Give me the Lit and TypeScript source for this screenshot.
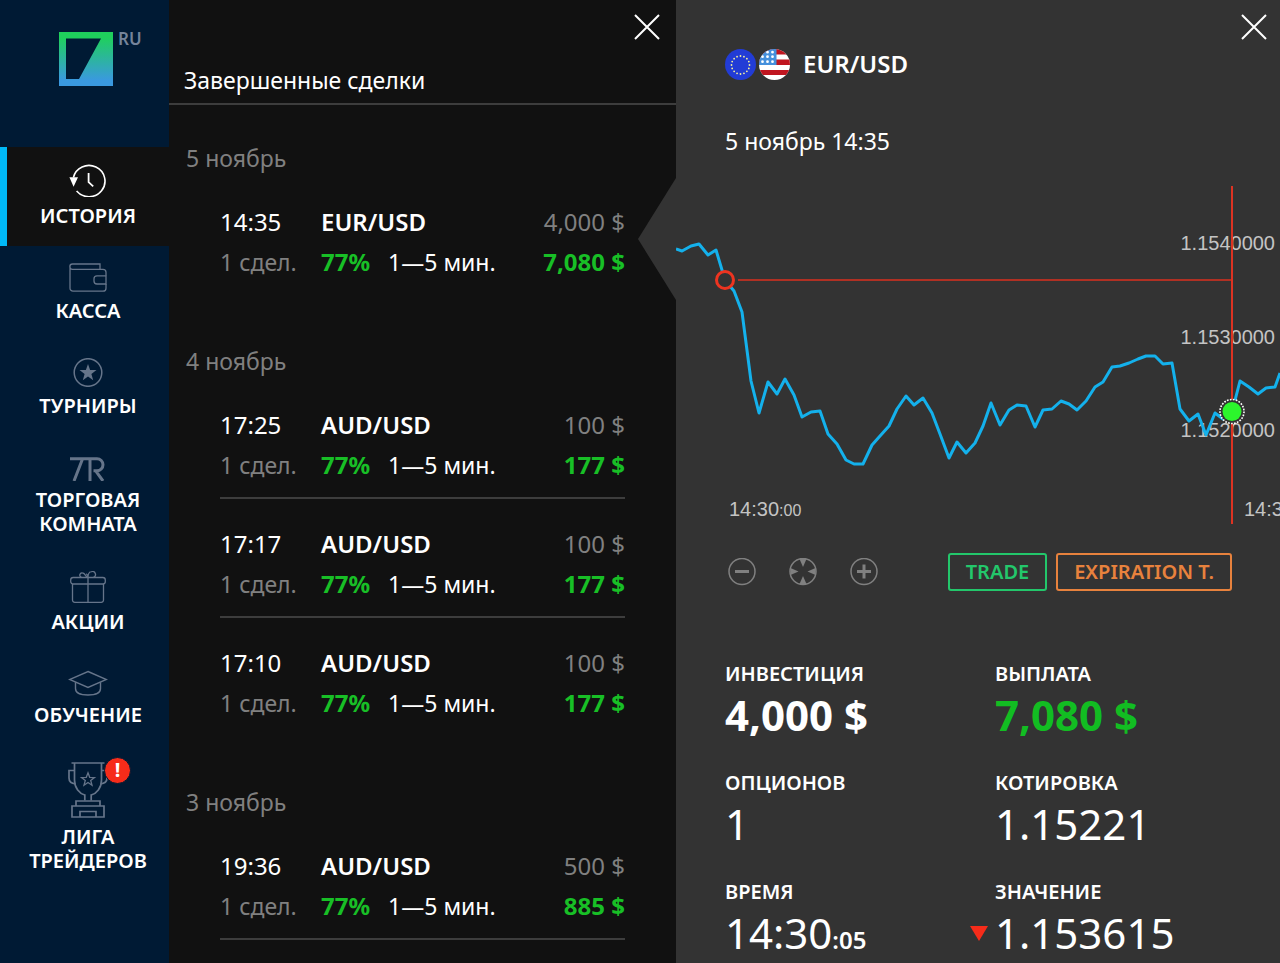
import { LitElement, html, css, svg, TemplateResult } from "lit";
import { customElement, property, state } from "lit/decorators.js";
import { classMap } from "lit/directives/class-map.js";

interface NavItem {
  id: string;
  label: string[];
  icon: TemplateResult;
  alert?: boolean;
}

interface Trade {
  time: string;
  pair: string;
  invested: string;
  payout: string;
  divider?: boolean;
}

interface TradeDay {
  date: string;
  trades: Trade[];
}

const NAV: NavItem[] = [
  {
    id: "history",
    label: ["ИСТОРИЯ"],
    icon: html`<svg width="38" height="33" viewBox="0 0 38 33" fill="none" stroke="#fff" stroke-width="1.6">
      <path d="M4.4 13.5A16 15.6 0 1 1 7.6 27" />
      <path d="M19.6 9v9.2l4.6 4.2" stroke-width="1.8" />
      <path d="M0.4 13.2h8.6l-4.4 9.6z" fill="#fff" stroke="none" />
    </svg>`,
  },
  {
    id: "cashier",
    label: ["КАССА"],
    icon: html`<svg width="38" height="29" viewBox="0 0 38 29" fill="none" stroke="#66758a" stroke-width="1.3">
      <path d="M31 6.300V1H3.500a2.600 2.600 0 0 0 0 5.300H34a3 3 0 0 1 3 3v3.500M37 21v4.200a3 3 0 0 1-3 3H4a3 3 0 0 1-3-3V3.600" />
      <path d="M37 12.800v8.200h-9a3 3 0 0 1-3-3v-2.200a3 3 0 0 1 3-3z" />
    </svg>`,
  },
  {
    id: "tournaments",
    label: ["ТУРНИРЫ"],
    icon: html`<svg width="30" height="29" viewBox="0 0 30 29" fill="none" stroke="#66758a" stroke-width="1.5">
      <circle cx="15" cy="14.500" r="13.800" />
      <path d="M15 6l2.100 6 6.400.1-5.100 3.900 1.800 6.200-5.200-3.700-5.200 3.700 1.800-6.200L6.500 12.100l6.400-.1z" fill="#66758a" stroke="none" />
    </svg>`,
  },
  {
    id: "room",
    label: ["ТОРГОВАЯ", "КОМНАТА"],
    icon: html`<svg width="36" height="28" viewBox="0 0 36 28" fill="none" stroke="#66758a" stroke-width="3">
      <path d="M0 5.700h27a6 6 0 0 1 0 12h-3.500M12.500 6L4 28M20 6v22M25.500 17.700L33 28" />
    </svg>`,
  },
  {
    id: "promo",
    label: ["АКЦИИ"],
    icon: html`<svg width="36" height="32" viewBox="0 0 36 32" fill="none" stroke="#66758a" stroke-width="1.3">
      <rect x="0.700" y="6.500" width="34.600" height="6.500" rx="2.500" />
      <path d="M2.500 13v16a2.300 2.300 0 0 0 2.500 2.300h26a2.300 2.300 0 0 0 2.500-2.300V13M18 6.500V31" />
      <path d="M17 6.300c-1.500-1-2-4.300-4.300-4.300a2.200 2.200 0 0 0-1.300 4.300M18 6.300c0-2.500 1-5.600 3.500-5.600a2.900 2.900 0 0 1 2 5.600M18 6.300c0-1.500-.7-2.800-1.700-3.500" />
    </svg>`,
  },
  {
    id: "education",
    label: ["ОБУЧЕНИЕ"],
    icon: html`<svg width="40" height="27" viewBox="0 0 40 27" fill="none" stroke="#66758a" stroke-width="1.400">
      <path d="M20 2.500L38.500 10.500 20 18.500 1.500 10.500z" />
      <path d="M7.500 13.300v6.200c0 4 4.500 6.500 12.500 6.500s12.500-2.500 12.500-6.500v-6.200" />
    </svg>`,
  },
  {
    id: "league",
    label: ["ЛИГА", "ТРЕЙДЕРОВ"],
    alert: true,
    icon: html`<svg width="40" height="56" viewBox="0 0 40 56" fill="none" stroke="#66758a" stroke-width="1.700">
      <path d="M3.500 1h33M6.500 1v17c0 8 5 13.500 10.300 15v5.500M33.500 1v17c0 8-5 13.500-10.300 15v5.500" />
      <path d="M6.500 8.500H1v7.500c0 4 2 5.500 6.500 6M33.500 8.500H39v7.500c0 4-2 5.500-6.500 6" />
      <path d="M8 44v-5h24v5M4 44h32v11H4zM12 55v-5.500h16V55" />
      <path d="M20 10.800l1.700 4.500 4.800.2-3.800 3 1.300 4.700-4-2.700-4 2.700 1.300-4.700-3.800-3 4.800-.2z" stroke-width="1.300" />
    </svg>`,
  },
];

const DAYS: TradeDay[] = [
  { date: "5 ноябрь", trades: [{ time: "14:35", pair: "EUR/USD", invested: "4,000 $", payout: "7,080 $" }] },
  {
    date: "4 ноябрь",
    trades: [
      { time: "17:25", pair: "AUD/USD", invested: "100 $", payout: "177 $", divider: true },
      { time: "17:17", pair: "AUD/USD", invested: "100 $", payout: "177 $", divider: true },
      { time: "17:10", pair: "AUD/USD", invested: "100 $", payout: "177 $" },
    ],
  },
  {
    date: "3 ноябрь",
    trades: [{ time: "19:36", pair: "AUD/USD", invested: "500 $", payout: "885 $", divider: true }],
  },
];

const QUOTES =
  "0,69 6,71 15,66 23,64 32,75 40,70 49,100 58,111 66,132 75,201 83,233 92,202 101,214 109,199 118,215 126,237 " +
  "135,232 144,231 152,254 161,264 170,280 178,284 187,284 196,265 204,256 213,246 221,229 230,216 238,225 247,218 " +
  "256,233 264,254 273,278 281,262 290,273 299,263 307,246 315,223 324,245 333,230 341,225 350,226 359,247 367,230 " +
  "376,229 385,221 393,224 401,230 410,221 419,207 427,202 436,187 444,186 453,183 462,179 470,176 479,176 487,184 " +
  "496,183 504,229 513,241 522,234 530,255 539,233 547,239 556,232 564,201 573,207 582,214 590,208 599,207 604,193";

const font = css`
  font-family: "Noto Sans", "Open Sans", sans-serif;
`;

const reset = css`
  *,
  *::before,
  *::after {
    box-sizing: border-box;
  }
  h1,
  h2,
  p,
  ul,
  dl,
  dd {
    margin: 0;
    padding: 0;
  }
  ul {
    list-style: none;
  }
  svg {
    display: block;
  }
  button {
    font: inherit;
    color: inherit;
    background: none;
    border: 0;
    margin: 0;
    padding: 0;
    cursor: pointer;
  }
`;

@customElement("close-button")
class CloseButton extends LitElement {
  static styles = [
    reset,
    css`
      :host {
        display: block;
      }
      .close {
        display: block;
        padding: 14px 13px;
      }
    `,
  ];

  render() {
    return html`<button class="close" type="button" aria-label="Закрыть">
      <svg width="26" height="26" viewBox="0 0 26 26" stroke="#fff" stroke-width="2">
        <path d="M1 1l24 24M25 1L1 25" />
      </svg>
    </button>`;
  }
}

@customElement("side-nav")
class SideNav extends LitElement {
  static styles = [
    reset,
    css`
      :host {
        display: block;
        background: #001a34;
      }
      .brand {
        display: flex;
        gap: 5px;
        height: 147px;
        padding: 32px 0 0 59px;
      }
      .lang {
        height: 14px;
        font-size: 17px;
        line-height: 14px;
        font-weight: 600;
        color: #75849a;
      }
      .item {
        display: flex;
        flex-direction: column;
        align-items: center;
        gap: 7px;
        padding: 17px 0 18px;
        border-left: 7px solid transparent;
        color: #fff;
        text-decoration: none;
        font-size: 20px;
        line-height: 24px;
        font-weight: 600;
        text-align: center;
      }
      .item.active {
        background: #111;
        border-left-color: #00b9f7;
      }
      .icon {
        position: relative;
      }
      .line {
        display: block;
      }
      .alert {
        position: absolute;
        top: -5px;
        left: 36px;
        width: 27px;
        height: 27px;
        border-radius: 50%;
        border: 1px solid #001a34;
        background: #f62c1a;
        font-size: 20px;
        font-weight: 700;
        line-height: 24px;
      }
    `,
  ];

  @state() private active = "history";

  private select(event: Event, id: string) {
    event.preventDefault();
    this.active = id;
  }

  render() {
    return html`
      <div class="brand">
        <svg width="54" height="54" viewBox="0 0 54 54">
          <defs>
            <linearGradient id="logo" x1="0" y1="0" x2="0" y2="1">
              <stop offset="0.1" stop-color="#1fd05c" />
              <stop offset="0.9" stop-color="#3a99e0" />
            </linearGradient>
          </defs>
          <path d="M0 0h54v54H0zM7 6.500V47h13L42 6.500z" fill="url(#logo)" fill-rule="evenodd" />
        </svg>
        <span class="lang">RU</span>
      </div>
      <nav>
        ${NAV.map(
          (item) => html`<a
            class=${classMap({ item: true, active: item.id === this.active })}
            href="#${item.id}"
            @click=${(e: Event) => this.select(e, item.id)}
          >
            <span class="icon">${item.icon}${item.alert ? html`<span class="alert">!</span>` : ""}</span>
            <span>${item.label.map((line) => html`<span class="line">${line}</span>`)}</span>
          </a>`
        )}
      </nav>
    `;
  }
}

@customElement("trade-history")
class TradeHistory extends LitElement {
  static styles = [
    reset,
    css`
      :host {
        display: block;
        background: #111;
        color: #fff;
        font-size: 24px;
        line-height: 32px;
      }
      .head {
        display: flex;
        flex-direction: column;
        border-bottom: 2px solid #3d3d3d;
      }
      .head close-button {
        align-self: flex-end;
        margin-right: 3px;
      }
      .title {
        padding: 10px 15px 7px;
        font-size: 23px;
        font-weight: 400;
      }
      .days {
        display: grid;
        gap: 67px;
        padding-top: 37px;
      }
      .date {
        padding-left: 17px;
        margin-bottom: 32px;
        font-size: 23px;
        font-weight: 400;
        color: #808080;
      }
      .trades {
        display: grid;
        gap: 29px;
        padding: 0 51px;
      }
      .trade {
        position: relative;
        display: grid;
        grid-template-columns: 101px minmax(0, 1fr) auto;
        row-gap: 8px;
        white-space: nowrap;
      }
      .trade.divider {
        padding-bottom: 16px;
        border-bottom: 2px solid #3d3d3d;
      }
      .trade.current::after {
        content: "";
        position: absolute;
        top: 50%;
        right: -51px;
        width: 38px;
        height: 122px;
        margin-top: -64px;
        background: #333;
        clip-path: polygon(100% 0, 0 50%, 100% 100%);
      }
      .pair {
        font-weight: 600;
      }
      .muted {
        color: #808080;
      }
      .note {
        font-size: 23px;
      }
      .terms {
        display: flex;
        gap: 18px;
      }
      .gain {
        font-weight: 700;
        color: #18bf26;
      }
      .sum {
        text-align: right;
      }
    `,
  ];

  render() {
    return html`
      <header class="head">
        <close-button></close-button>
        <h1 class="title">Завершенные сделки</h1>
      </header>
      <div class="days">
        ${DAYS.map(
          (day, d) => html`<section>
            <h2 class="date">${day.date}</h2>
            <ul class="trades">
              ${day.trades.map(
                (t, i) => html`<li class=${classMap({ trade: true, divider: !!t.divider, current: d === 0 && i === 0 })}>
                  <span>${t.time}</span>
                  <span class="pair">${t.pair}</span>
                  <span class="sum muted">${t.invested}</span>
                  <span class="note muted">1 сдел.</span>
                  <span class="terms"><span class="gain">77%</span><span class="note">1—5 мин.</span></span>
                  <span class="sum gain">${t.payout}</span>
                </li>`
              )}
            </ul>
          </section>`
        )}
      </div>
    `;
  }
}

@customElement("quote-chart")
class QuoteChart extends LitElement {
  static styles = [
    reset,
    css`
      :host {
        display: block;
      }
      .chart {
        width: 100%;
        height: auto;
        overflow: hidden;
      }
      .axis {
        fill: #c4c4c4;
        font-family: "Liberation Sans", Arial, sans-serif;
        font-size: 20px;
      }
      .seconds {
        font-size: 16px;
      }
      .quotes {
        fill: none;
        stroke: #14b1ec;
        stroke-width: 3;
        stroke-linejoin: round;
      }
      .level {
        stroke: #b03023;
        stroke-width: 2;
      }
      .expiry {
        stroke: #dd3322;
        stroke-width: 2;
      }
    `,
  ];

  render() {
    const levels = [
      { value: "1.1540000", y: 70 },
      { value: "1.1530000", y: 164 },
      { value: "1.1520000", y: 257 },
    ];
    return html`<svg class="chart" viewBox="0 0 604 350" role="img" aria-label="EUR/USD">
      ${levels.map((l) => svg`<text class="axis" x="599" y=${l.y} text-anchor="end">${l.value}</text>`)}
      <text class="axis" x="53" y="336">14:30<tspan class="seconds">:00</tspan></text>
      <text class="axis" x="568" y="336">14:35</text>
      <path class="level" d="M62 100H556" />
      <polyline class="quotes" points=${QUOTES} />
      <path class="expiry" d="M556 6V344" />
      <circle cx="49" cy="100" r="8.500" fill="#333" stroke="#ee3420" stroke-width="3" />
      <circle cx="556" cy="231.500" r="12" fill="#333" stroke="#fff" stroke-width="1.600" stroke-dasharray="1.700 1.300" />
      <circle cx="556" cy="231.500" r="9.500" fill="#2cf52c" />
    </svg>`;
  }
}

@customElement("trade-metric")
class TradeMetric extends LitElement {
  static styles = [
    reset,
    css`
      :host {
        display: grid;
        gap: 5px;
        align-content: start;
      }
      .label {
        font-size: 20px;
        line-height: 24px;
        font-weight: 600;
      }
      .value {
        position: relative;
        font-size: 42px;
        line-height: 48px;
        white-space: nowrap;
      }
      .strong {
        font-weight: 700;
      }
      .gain {
        color: #12bd22;
      }
      .small {
        font-size: 24px;
        line-height: 24px;
        font-weight: 600;
      }
      .down {
        position: absolute;
        top: 17px;
        left: -25px;
      }
    `,
  ];

  @property() label = "";
  @property() value = "";
  @property() suffix = "";
  @property({ type: Boolean }) strong = false;
  @property({ type: Boolean }) gain = false;
  @property({ type: Boolean }) falling = false;

  render() {
    return html`
      <p class="label">${this.label}</p>
      <p class=${classMap({ value: true, strong: this.strong, gain: this.gain })}>
        ${this.falling
          ? html`<svg class="down" width="18" height="15" viewBox="0 0 18 15"><path d="M0 0h18L9 15z" fill="#f62c1a" /></svg>`
          : ""}${this.value}${this.suffix ? html`<span class="small">${this.suffix}</span>` : ""}
      </p>
    `;
  }
}

@customElement("trade-details")
class TradeDetails extends LitElement {
  static styles = [
    reset,
    css`
      :host {
        display: block;
        background: #333;
        color: #fff;
        font-size: 24px;
        line-height: 32px;
      }
      .head {
        display: flex;
        justify-content: space-between;
        align-items: flex-start;
        padding: 0 0 23px 49px;
      }
      .intro {
        display: grid;
        gap: 45px;
        padding-top: 48px;
      }
      .pair {
        display: flex;
        align-items: center;
        gap: 3px;
        font-size: 24px;
        font-weight: 600;
      }
      .name {
        margin-left: 10px;
      }
      .opened {
        font-size: 23px;
      }
      .tools {
        display: flex;
        justify-content: space-between;
        align-items: center;
        padding: 23px 48px 71px 52px;
      }
      .zoom {
        display: flex;
        gap: 33px;
      }
      .marks {
        display: flex;
        gap: 9px;
      }
      .mark {
        height: 38px;
        padding: 0 16px;
        border: 2px solid currentColor;
        border-radius: 3px;
        font-size: 20px;
        line-height: 34px;
        font-weight: 600;
        white-space: nowrap;
      }
      .trade {
        color: #23c76b;
      }
      .expiration {
        color: #e8823d;
      }
      .metrics {
        display: grid;
        grid-template-columns: 270fr 237fr;
        row-gap: 32px;
        padding: 0 48px 5px 49px;
      }
    `,
  ];

  private flags() {
    const stars = Array.from({ length: 16 }, (_, i) => {
      const a = (i / 16) * Math.PI * 2;
      return svg`<circle cx=${15.5 + Math.sin(a) * 9} cy=${16 - Math.cos(a) * 9} r="0.9" fill="#f4f0a0" />`;
    });
    return html`
      <svg width="31" height="31" viewBox="0 0 31 31"><circle cx="15.500" cy="15.500" r="15.500" fill="#223cd6" />${stars}</svg>
      <svg width="31" height="31" viewBox="0 0 31 31">
        <defs><clipPath id="round"><circle cx="15.500" cy="15.500" r="15.500" /></clipPath></defs>
        <g clip-path="url(#round)">
          <path d="M0 0h31v31H0z" fill="#fff" />
          <path d="M0 0h31v5.500H0zM0 10.500h31v5.500H0zM0 21h31v5H0z" fill="#c01620" />
          <path d="M0 0h17.500v16H0z" fill="#4590dc" />
          <path
            d="M3.500 3.200h0M8.500 3.200h0M13.500 3.200h0M3.500 7.700h0M8.500 7.700h0M13.500 7.700h0M3.500 12.700h0M8.500 12.700h0M13.500 12.700h0"
            stroke="#fff"
            stroke-width="2.800"
            stroke-linecap="round"
          />
        </g>
      </svg>
    `;
  }

  render() {
    return html`
      <header class="head">
        <div class="intro">
          <h1 class="pair">${this.flags()}<span class="name">EUR/USD</span></h1>
          <p class="opened">5 ноябрь 14:35</p>
        </div>
        <close-button></close-button>
      </header>
      <quote-chart></quote-chart>
      <div class="tools">
        <div class="zoom">
          <button type="button" aria-label="Уменьшить">
            <svg width="28" height="28" viewBox="0 0 28 28" fill="none" stroke="#808080">
              <circle cx="14" cy="13.500" r="13" stroke-width="1.500" />
              <path d="M7 13.500h14" stroke-width="3" />
            </svg>
          </button>
          <button type="button" aria-label="По центру">
            <svg width="28" height="28" viewBox="0 0 28 28" fill="#808080">
              <circle cx="14" cy="13.500" r="13" fill="none" stroke="#808080" stroke-width="1.500" />
              <path d="M10.500 1h7L14 9zM10.500 26h7L14 18zM1.500 10v7L9.500 13.500zM26.500 10v7L18.500 13.500z" />
            </svg>
          </button>
          <button type="button" aria-label="Увеличить">
            <svg width="28" height="28" viewBox="0 0 28 28" fill="none" stroke="#808080">
              <circle cx="14" cy="13.500" r="13" stroke-width="1.500" />
              <path d="M7 13.500h14M14 6.500v14" stroke-width="3" />
            </svg>
          </button>
        </div>
        <div class="marks">
          <button class="mark trade" type="button">TRADE</button>
          <button class="mark expiration" type="button">EXPIRATION T.</button>
        </div>
      </div>
      <div class="metrics">
        <trade-metric label="ИНВЕСТИЦИЯ" value="4,000 $" strong></trade-metric>
        <trade-metric label="ВЫПЛАТА" value="7,080 $" strong gain></trade-metric>
        <trade-metric label="ОПЦИОНОВ" value="1"></trade-metric>
        <trade-metric label="КОТИРОВКА" value="1.15221"></trade-metric>
        <trade-metric label="ВРЕМЯ" value="14:30" suffix=":05"></trade-metric>
        <trade-metric label="ЗНАЧЕНИЕ" value="1.153615" falling></trade-metric>
      </div>
    `;
  }
}

@customElement("app-root")
class AppRoot extends LitElement {
  static styles = css`
    :host {
      display: grid;
      grid-template-columns: 169px minmax(0, 507fr) minmax(0, 604fr);
      min-height: 100vh;
      ${font}
    }
  `;

  render() {
    return html`
      <side-nav></side-nav>
      <trade-history></trade-history>
      <trade-details></trade-details>
    `;
  }
}
